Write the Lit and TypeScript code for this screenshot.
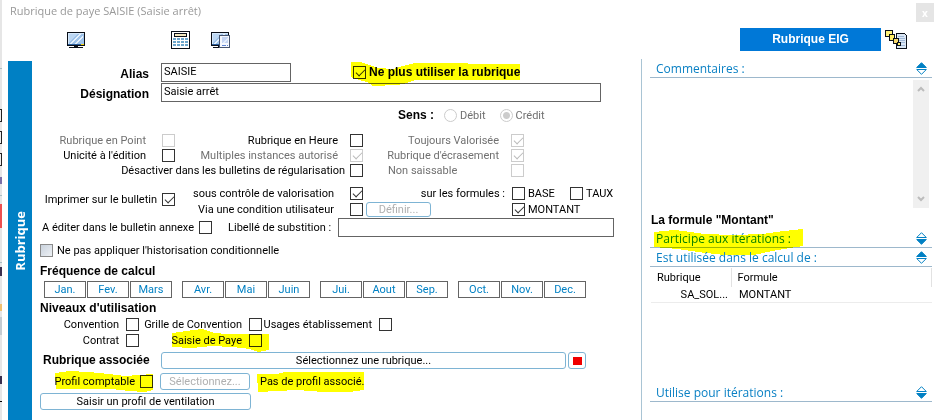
import { LitElement, html, svg, css, nothing } from "lit";
import { customElement } from "lit/decorators.js";

type CheckOptions = { checked?: boolean; disabled?: boolean; after?: boolean; cls?: string };

const QUARTERS = [
  ["Jan.", "Fev.", "Mars"],
  ["Avr.", "Mai", "Juin"],
  ["Jui.", "Aout", "Sep."],
  ["Oct.", "Nov.", "Dec."],
];

const check = (text: string, o: CheckOptions = {}, mark: unknown = nothing) => {
  const box = html`<input type="checkbox" ?checked=${o.checked} ?disabled=${o.disabled} />`;
  const label = html`<span>${text}</span>`;
  return html`<label class="check ${o.disabled ? "off" : ""} ${o.cls ?? ""}">
    ${o.after ? html`${box}${label}` : html`${label}${box}`}${mark}
  </label>`;
};

// Felt-pen stroke laid over a label
const marker = (cls: string, w: number, h: number, points: string) => html`<svg
  class="marker ${cls}" width=${w} height=${h} viewBox="0 0 ${w} ${h}" shape-rendering="crispEdges" aria-hidden="true"
><polygon points=${points} fill="#ffff00" /></svg>`;

const screenShape = svg`
  <rect x="0.5" y="0.5" width="17" height="13" fill="#9fc3ea" stroke="#0a0f18"/>
  <path d="M1 1h16v1H1zM1 1h1v12H1z" fill="#d6e8fa"/>
  <path d="M2 2h8L3 10H2z" fill="#bcd7f3"/>
  <path d="M3 12L12 2h2L5 12zM8 12l8-9v2l-6 7z" fill="#e6f1fc"/>
  <path d="M1 12h16v1H1z" fill="#2c5f9c"/>
  <path d="M14 12h3v1h-3z" fill="#ffd800"/>
  <path d="M7 14h4v1H7zM2 15h14v1H2z" fill="#0a0f18"/>`;

const screenIcon = html`<svg width="18" height="16" viewBox="0 0 18 16" shape-rendering="crispEdges" aria-hidden="true">${screenShape}</svg>`;

const calcIcon = html`<svg width="19" height="18" viewBox="0 0 19 18" shape-rendering="crispEdges" aria-hidden="true">
  <rect x="0.5" y="0.5" width="18" height="17" fill="#fff" stroke="#0a0f18"/>
  <rect x="3.5" y="2.5" width="12" height="3" fill="#f3e6bd" stroke="#0a0f18"/>
  ${[2, 6, 10, 14].map((x) => [7, 10, 13].map((y) => svg`<rect x=${x} y=${y} width="3" height="2" fill="#6da6cc"/>`))}
</svg>`;

const screenDocIcon = html`<svg width="19" height="16" viewBox="0 0 19 16" shape-rendering="crispEdges" aria-hidden="true">
  ${screenShape}
  <rect x="8.5" y="3.5" width="10" height="12" fill="#f4f7fd" stroke="#46546e"/>
  <rect x="11" y="5" width="6" height="6" fill="#c3d4f3"/>
  <path d="M11 11l6-6v2l-4 4z" fill="#e3ecfb"/>
  <path d="M11 13h4v1h-4zM16 13h1v1h-1z" fill="#5b82d4"/>
</svg>`;

const chainIcon = html`<svg width="22" height="19" viewBox="0 0 22 19" shape-rendering="crispEdges" aria-hidden="true">
  <path d="M11.500 3.500h8l2 2v13h-10z" fill="#dbe7f5" stroke="#0a0f18"/>
  <path d="M13 6h6v1h-6zM13 8h7v1h-7zM14 10h6v1h-6zM15 12h5v1h-5zM13 15h7v1h-7z" fill="#9fb8d8"/>
  <rect x="0.500" y="0.500" width="7" height="6" fill="#fff27a" stroke="#0a0f18"/>
  <rect x="4.500" y="4.500" width="5" height="6" fill="#ffee66" stroke="#0a0f18"/>
  <rect x="8.500" y="8.500" width="5" height="5" fill="#f5d76a" stroke="#0a0f18"/>
  <rect x="12.500" y="12.500" width="3" height="3" fill="#ffee66" stroke="#0a0f18"/>
</svg>`;

const sorter = (up: boolean) => html`<svg width="11" height="13" viewBox="0 0 11 13" aria-hidden="true">
  <path d="M5.500 0.700L10.300 5.500H0.700z" fill=${up ? "#0080c4" : "#fff"} stroke="#0080c4" stroke-width="1"/>
  <path d="M5.500 12.300L10.300 7.500H0.700z" fill=${up ? "#fff" : "#0080c4"} stroke="#0080c4" stroke-width="1"/>
</svg>`;

const arrow = (d: string) => html`<svg width="8" height="6" viewBox="0 0 8 6" aria-hidden="true"><path d=${d} fill="none" stroke="#bcbcbc" stroke-width="2"/></svg>`;

const section = (text: string, up: boolean, mark: unknown = nothing) => html`<div class="section">
  <h2>${text}${mark}</h2>
  <button class="bare" aria-label="Déplier ${text}">${sorter(up)}</button>
</div>`;

@customElement("app-root")
export class AppRoot extends LitElement {
  static styles = css`
    :host {
      display: flex;
      min-height: 100vh;
      background: #fff;
      color: #000;
      font: 11px/15px Roboto, "Liberation Sans", sans-serif;
    }
    * { box-sizing: border-box; }
    h1, h2, h3 { margin: 0; font-weight: normal; }
    button, input, textarea { font: inherit; color: inherit; margin: 0; border-radius: 0; }
    svg { display: block; flex: none; }
    .backdrop { width: 2px; flex: none; background: #e6e6e6; }
    .backdrop svg { width: 2px; height: 420px; }
    .window { flex: 1; min-width: 0; display: flex; flex-direction: column; }
    .title { display: flex; justify-content: space-between; height: 24px; padding-left: 8px; color: #999; }
    .title h1 { font: 11px/22px "Open Sans", sans-serif; }
    .close { width: 18px; height: 19px; margin-top: 3px; padding: 0; border: 0; background: #e5e5e5; color: #fff; font: bold 10px/16px "Open Sans", sans-serif; }
    .tools { display: flex; align-items: center; height: 35px; padding: 0 27px 4px 65px; }
    .bare { border: 0; padding: 0; background: none; }
    .tools .calc { margin-left: 86px; }
    .tools .doc { margin-left: 21px; }
    .eig { width: 141px; height: 23px; margin: 0 4px 0 auto; padding: 0; border: 0; background: #0078d7; color: #fff; }
    .bold, .eig { font: bold 12px/15px "Liberation Sans", sans-serif; }
    .main { flex: 1; display: flex; padding-left: 6px; }
    .side { width: 24px; flex: none; margin-top: 2px; display: flex; align-items: center; justify-content: center; background: #0080c4; color: #fff; }
    .side span { writing-mode: vertical-rl; transform: rotate(180deg); font: bold 13px/24px "Open Sans", sans-serif; }

    form { flex: 1; min-width: 0; padding: 4px 24px 10px 8px; display: flex; flex-direction: column; }
    .row { display: flex; align-items: center; flex: none; }
    .text { height: 19px; padding: 0 2px 2px; border: 1px solid #646464; background: #fff; outline: 0; min-width: 0; }
    .field { height: 19px; margin-bottom: 1px; }
    .field > label[for] { width: 109px; margin-right: 12px; padding-top: 4px; text-align: right; }
    .alias { width: 130px; }
    .grow { flex: 1; }
    .desig { margin-right: 16px; }
    .check { position: relative; display: flex; align-items: center; justify-content: flex-end; gap: 12px; white-space: nowrap; }
    .check.after { justify-content: flex-start; gap: 3px; }
    .near.near { gap: 5px; }
    .mid.mid { gap: 7px; }
    .wide.wide { gap: 16px; }
    .off { color: #707070; }
    input[type="checkbox"] { appearance: none; width: 13px; height: 13px; flex: none; border: 1px solid #333; background: #fff; }
    input[type="checkbox"]:disabled { border-color: #ccc; }
    input[type="checkbox"]:checked::before { content: ""; display: block; width: 8px; height: 4px; margin: 2px 0 0 2px; border: solid #333; border-width: 0 0 1px 1px; transform: rotate(-45deg); }
    input[type="checkbox"]:disabled:checked::before { border-color: #bbb; }
    .soft.soft { gap: 4px; }
    .soft input[type="checkbox"] { border-color: #8a8a8a; background: linear-gradient(135deg, #c9d2dd, #eef1f5); }
    .retire { margin-left: 62px; }
    input[type="radio"] { appearance: none; width: 13px; height: 13px; border: 1px solid #ccc; border-radius: 50%; background: #fff; }
    input[type="radio"]:checked { background: radial-gradient(circle, #ccc 3px, #fff 4px); }
    .sens { height: 18px; margin: 3px 0 9px 358px; }
    .sens .check { margin-left: 10px; gap: 3px; }
    .sens .check + .check { margin-left: 14px; }
    .flags { height: 15px; }
    .c1 { width: 135px; flex: none; }
    .c2 { width: 188px; flex: none; }
    .c3 { width: 161px; flex: none; }
    .stretch { width: 323px; }
    .left { justify-content: space-between; padding-left: 25px; }
    .print { display: flex; align-items: flex-start; margin-top: 7px; }
    .print > .c1 { height: 28px; }
    .line { display: flex; align-items: center; height: 16px; }
    .outline { height: 17px; padding: 0; border: 1px solid #7eb4d4; border-radius: 3px; background: #fff; line-height: 14px; white-space: nowrap; }
    .outline:disabled { color: #b0b0b0; }
    .define { width: 65px; height: 15px; margin-left: 3px; }
    .formulas { flex: 1; }
    .formulas > span { width: 142px; margin-right: 7px; text-align: right; white-space: nowrap; }
    .formulas .check { width: 58px; }
    .montant { margin-left: 81px; }
    .annex { height: 19px; margin-top: 1px; padding: 0 3px 0 2px; }
    .annex .check { gap: 5px; }
    .annex label.plain { margin: 0 7px 0 16px; white-space: nowrap; }
    .histo { height: 14px; margin-top: 6px; }
    .head { height: 16px; margin-top: 6px; padding-top: 1px; }
    .months { gap: 10px; margin: 2px 0 0 4px; color: #0080c4; }
    .quarter { display: flex; gap: 1px; }
    .month { width: 42px; height: 17px; padding: 0; border: 1px solid #646464; background: #fff; line-height: 14px; }
    .months + .head { margin-top: 2px; }
    .levels { height: 16px; }
    .l1 { width: 99px; }
    .l2 { width: 123px; }
    .l3 { width: 130px; }
    .assoc { margin-top: 4px; gap: 2px; padding-right: 31px; }
    .assoc .bold { width: 119px; padding-left: 3px; }
    .clear { width: 18px; display: grid; place-items: center; }
    .clear i { width: 9px; height: 8px; background: #f00000; }
    .profile { margin-top: 4px; }
    .profile .check { width: 113px; }
    .pick { width: 90px; margin: 0 10px 0 7px; }
    .note { position: relative; }
    .vent { width: 211px; margin-top: 3px; }
    .marker { position: absolute; mix-blend-mode: multiply; pointer-events: none; }
    .m-retire { left: -4px; top: -3px; }
    .m-paye { left: 33px; top: -4px; }
    .m-profile { right: 0; top: -3px; }
    .m-note { left: -3px; top: -2px; }
    .m-part { left: -2px; top: 0; }

    aside { width: 293px; flex: none; padding-left: 8px; border-left: 1px solid #a9c4d4; display: flex; flex-direction: column; }
    .section { display: flex; align-items: center; justify-content: space-between; flex: none; height: 19px; padding: 0 5px 0 6px; border-bottom: 1px solid #9db8cc; margin-right: 2px; }
    .section h2 { position: relative; padding-top: 2px; font: 12px/16px "Open Sans", sans-serif; color: #0a80c4; }
    .comments { display: flex; height: 128px; margin: 2px 5px 5px 0; }
    .comments textarea { flex: 1; border: 0; padding: 0; resize: none; outline: 0; }
    .scroll { width: 16px; padding: 6px 4px; display: flex; flex-direction: column; justify-content: space-between; background: #f0f0f0; }
    .montant-title { padding-left: 1px; height: 16px; }
    table { width: 281px; margin: 1px 0 0 1px; border-collapse: collapse; table-layout: fixed; }
    th { height: 19px; padding: 0 0 0 6px; text-align: left; font-weight: normal; border-right: 1px solid #e2e2e2; }
    th:first-child { width: 80px; }
    td { height: 15px; padding: 0 0 0 8px; border-bottom: 1px solid #ececec; white-space: nowrap; }
    td:first-child { padding: 0 3px 0 0; text-align: right; }
    .fill { flex: 1; }
    .last { margin-bottom: 18px; }
  `;

  render() {
    return html`
      <div class="backdrop">
        <svg viewBox="0 0 2 420" shape-rendering="crispEdges" aria-hidden="true">
          <path d="M0 68h2v1H0zM0 195h2v1H0zM0 262h2v1H0z" fill="#a9bfc4" />
          <path d="M0 109h2v13H0zM0 131h2v13H0zM0 153h2v13H0z" fill="#222" />
          <path d="M0 110h1v11H0zM0 132h1v11H0zM0 154h1v11H0z" fill="#eee" />
          <path d="M0 177h2v7H0z" fill="#7a70a8" />
          <path d="M0 204h2v24H0z" fill="#ee5050" />
          <path d="M0 267h2v9H0zM0 376h2v8H0z" fill="#3a3050" />
          <path d="M0 304h2v7H0z" fill="#f0c070" />
          <path d="M0 317h2v18H0z" fill="#c4ccd2" />
          <path d="M0 401h2v1H0z" fill="#000" />
        </svg>
      </div>
      <div class="window">
        <header class="title">
          <h1>Rubrique de paye SAISIE (Saisie arrêt)</h1>
          <button class="close" aria-label="Fermer">x</button>
        </header>
        <div class="tools">
          <button class="bare" aria-label="Écran">${screenIcon}</button>
          <button class="bare calc" aria-label="Calcul">${calcIcon}</button>
          <button class="bare doc" aria-label="Aperçu">${screenDocIcon}</button>
          <button class="eig">Rubrique EIG</button>
          <button class="bare" aria-label="Enchaînement">${chainIcon}</button>
        </div>
        <div class="main">
          <div class="side"><span>Rubrique</span></div>
          ${this.renderForm()} ${this.renderAside()}
        </div>
      </div>
    `;
  }

  private renderForm() {
    return html`<form>
      <div class="row field">
        <label class="bold" for="alias">Alias</label>
        <input class="text alias" id="alias" value="SAISIE" />
        ${check("Ne plus utiliser la rubrique", { checked: true, after: true, cls: "after bold retire" },
          marker("m-retire", 171, 25, "2,0 12,0 20,3 30,6 44,7 54,4 66,1 171,2 171,18 66,18 58,21 48,23 24,24 18,20 10,18 2,15"))}
      </div>
      <div class="row field">
        <label class="bold" for="desig">Désignation</label>
        <input class="text grow desig" id="desig" value="Saisie arrêt" />
      </div>
      <div class="row sens">
        <span class="bold">Sens :</span>
        <label class="check off"><input type="radio" name="sens" disabled /><span>Débit</span></label>
        <label class="check off"><input type="radio" name="sens" disabled checked /><span>Crédit</span></label>
      </div>
      <div class="row flags">
        ${check("Rubrique en Point", { disabled: true, cls: "c1 wide" })}
        ${check("Rubrique en Heure", { cls: "c2" })}
        ${check("Toujours Valorisée", { checked: true, disabled: true, cls: "c3" })}
      </div>
      <div class="row flags">
        ${check("Unicité à l'édition", { cls: "c1 wide" })}
        ${check("Multiples instances autorisé", { checked: true, disabled: true, cls: "c2" })}
        ${check("Rubrique d'écrasement", { checked: true, disabled: true, cls: "c3" })}
      </div>
      <div class="row flags">
        ${check("Désactiver dans les bulletins de régularisation", { cls: "stretch near" })}
        ${check("Non saissable", { disabled: true, cls: "c3 left" })}
      </div>
      <div class="print">
        ${check("Imprimer sur le bulletin", { checked: true, cls: "c1 near" })}
        <div class="grow">
          <div class="line">
            ${check("sous contrôle de valorisation", { checked: true, cls: "c2 wide" })}
            <div class="line formulas">
              <span>sur les formules :</span>
              ${check("BASE", { after: true, cls: "after" })}
              ${check("TAUX", { after: true, cls: "after" })}
            </div>
          </div>
          <div class="line">
            ${check("Via une condition utilisateur", { cls: "c2 wide" })}
            <button type="button" class="outline define" disabled>Définir...</button>
            ${check("MONTANT", { checked: true, after: true, cls: "after montant" })}
          </div>
        </div>
      </div>
      <div class="row annex">
        ${check("A éditer dans le bulletin annexe")}
        <label class="plain" for="subst">Libellé de substition :</label>
        <input class="text grow" id="subst" />
      </div>
      <div class="row histo">
        ${check("Ne pas appliquer l'historisation conditionnelle", { after: true, cls: "after soft" })}
      </div>
      <h3 class="bold head">Fréquence de calcul</h3>
      <div class="row months">
        ${QUARTERS.map((q) => html`<div class="quarter">${q.map((m) => html`<button type="button" class="month">${m}</button>`)}</div>`)}
      </div>
      <h3 class="bold head">Niveaux d'utilisation</h3>
      <div class="row levels">
        ${check("Convention", { cls: "l1 mid" })}
        ${check("Grille de Convention", { cls: "l2 mid" })}
        ${check("Usages établissement", { cls: "l3 mid" })}
      </div>
      <div class="row levels">
        ${check("Contrat", { cls: "l1 mid" })}
        ${check("Saisie de Paye", { cls: "l2 mid" },
          marker("m-paye", 98, 24, "0,4 14,2 30,0 42,4 56,5 97,5 97,21 86,23 78,20 60,18 40,17 20,19 0,18"))}
      </div>
      <div class="row assoc">
        <span class="bold">Rubrique associée</span>
        <button type="button" class="outline grow">Sélectionnez une rubrique...</button>
        <button type="button" class="outline clear" aria-label="Effacer"><i></i></button>
      </div>
      <div class="row profile">
        ${check("Profil comptable", { cls: "near" },
          marker("m-profile", 98, 22, "0,2 14,0 34,1 54,3 70,5 98,3 98,19 90,21 74,20 56,18 1,18"))}
        <button type="button" class="outline pick" disabled>Sélectionnez...</button>
        <span class="note">Pas de profil associé.${marker("m-note", 107, 22, "0,2 20,2 28,0 107,0 107,18 92,20 66,20 40,18 1,20")}</span>
      </div>
      <button type="button" class="outline vent">Saisir un profil de ventilation</button>
    </form>`;
  }

  private renderAside() {
    return html`<aside>
      ${section("Commentaires :", true)}
      <div class="comments">
        <textarea aria-label="Commentaires"></textarea>
        <div class="scroll">${arrow("M1 5l3-3 3 3")}${arrow("M1 1l3 3 3-3")}</div>
      </div>
      <h3 class="bold montant-title">La formule "Montant"</h3>
      ${section("Participe aux itérations :", false,
        marker("m-part", 150, 28, "0,3 20,1 30,2 50,5 80,6 108,5 130,2 149,0 149,17 136,19 118,22 100,26 70,26 44,23 24,20 0,18"))}
      ${section("Est utilisée dans le calcul de :", true)}
      <table>
        <thead><tr><th>Rubrique</th><th>Formule</th></tr></thead>
        <tbody><tr><td>SA_SOL...</td><td>MONTANT</td></tr></tbody>
      </table>
      <div class="fill"></div>
      <div class="last">${section("Utilise pour itérations :", false)}</div>
    </aside>`;
  }
}
